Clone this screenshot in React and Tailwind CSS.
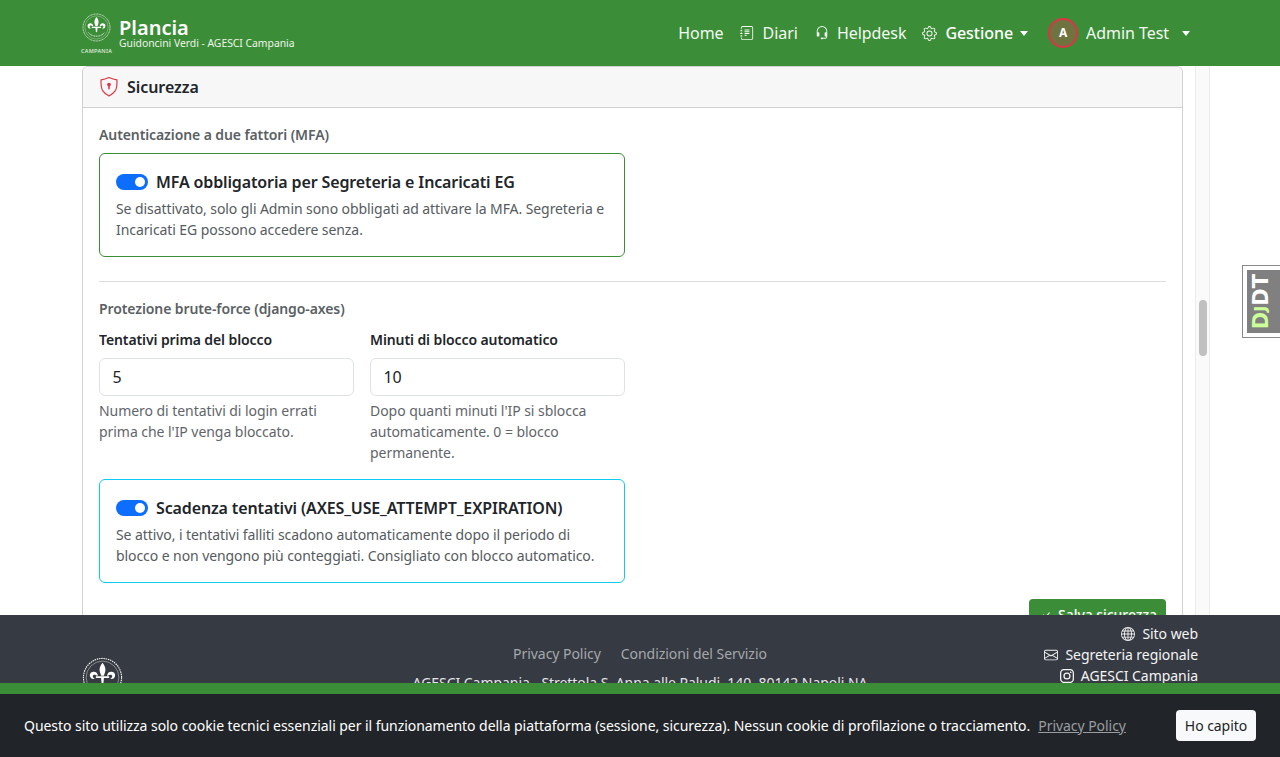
import React from "react";
import { BsJournalText, BsHeadset, BsGear, BsGlobe, BsEnvelope, BsInstagram, BsCheckLg } from "react-icons/bs";

function Logo({ size, label, color = "#ffffff" }) {
  return (
    <div className="flex flex-col items-center shrink-0" style={{ width: size }}>
      <svg viewBox="0 0 40 40" style={{ width: size, height: size }} fill="none">
        <circle cx="20" cy="20" r="18.6" stroke={color} strokeWidth="1.1" strokeDasharray="1.4 0.8" />
        <circle cx="20" cy="20" r="16" stroke={color} strokeWidth="0.4" />
        <path d="M20 5.5c-2.4 3-3.4 5.6-2.6 9 .3 1.4.9 2.5 1.3 3.8h2.6c.4-1.3 1-2.4 1.3-3.8.8-3.4-.2-6-2.6-9z" fill={color} />
        <path d="M15.6 18.3c-.3-2.6-2-4.2-4.6-4-2.600.2-4 2.600-3 5 .8 2 3 2.700 4.500 1.700-1-.3-2-1-2-2.200 0-1.300 1.200-1.900 2.200-1.400.9.400 1.500 1 1.900.900z" fill={color} />
        <path d="M24.400 18.300c.3-2.600 2-4.200 4.600-4 2.600.2 4 2.600 3 5-.8 2-3 2.700-4.500 1.700 1-.3 2-1 2-2.200 0-1.300-1.200-1.900-2.200-1.400-.9.400-1.500 1-1.900.900z" fill={color} />
        <rect x="13.500" y="18.800" width="13" height="1.800" rx=".5" fill={color} />
        <path d="M18.600 20.600h2.800l-.5 5-.9 1.400-.9-1.400z" fill={color} />
        <path d="M9 27c3 3.500 6.500 5 11 5s8-1.500 11-5" stroke={color} strokeWidth="1.200" strokeDasharray="1.500 .8" />
      </svg>
      {label && <span className="text-[5.5px] leading-[7px] font-medium tracking-[0.3px] text-[#e8f2e6] mt-[6px]">CAMPANIA</span>}
    </div>
  );
}

function Caret() {
  return <span className="inline-block w-0 h-0 border-t-[5px] border-x-[4px] border-t-white border-x-transparent" />;
}

function Toggle() {
  return (
    <span className="w-8 h-4 rounded-full bg-[#0d6efd] flex items-center justify-end px-[3px] shrink-0">
      <span className="w-[10px] h-[10px] rounded-full bg-white" />
    </span>
  );
}

function OptionBox({ title, desc, border }) {
  return (
    <div className={`border rounded-md p-4 ${border}`}>
      <div className="flex items-center gap-2 h-6 font-semibold text-base tracking-[-0.13px] text-[#212529]">
        <Toggle />
        <span>{title}</span>
      </div>
      <p className="mt-1 text-sm leading-[21px] tracking-[-0.08px] text-[#555b61]">{desc}</p>
    </div>
  );
}

function Field({ label, value, help }) {
  return (
    <div>
      <div className="text-sm leading-[21px] font-semibold tracking-[-0.1px] text-[#212529] mb-2">{label}</div>
      <div className="h-[38px] rounded-md border border-[#dee2e6] bg-white pl-[12.5px] flex items-center text-base text-[#212529]">{value}</div>
      <p className="mt-1 text-sm leading-[21px] text-[#5f656b]">{help}</p>
    </div>
  );
}

export default function App() {
  return (
    <div className="relative h-[757px] w-full overflow-hidden flex flex-col bg-white font-['Noto_Sans',sans-serif] tracking-[-0.05px] text-[#212529]">
      <header className="h-[66px] shrink-0 bg-[#3c8d37] text-white flex items-center pl-[82px] pr-[90px] justify-between">
        <div className="flex items-center gap-2">
          <div className="mt-px"><Logo size={29} label /></div>
          <div className="flex flex-col -mt-[2px]">
            <span className="text-xl leading-[22px] font-semibold tracking-normal">Plancia</span>
            <span className="text-[10.4px] leading-[8px] tracking-[-0.03px] text-[#eef5ec]">Guidoncini Verdi - AGESCI Campania</span>
          </div>
        </div>
        <nav className="flex items-center text-base text-[#f3f8f2]">
          <span>Home</span>
          <BsJournalText className="ml-[16px] w-[14px] h-[14px]" />
          <span className="ml-[9px]">Diari</span>
          <BsHeadset className="ml-[17px] w-[14px] h-[14px]" />
          <span className="ml-2">Helpdesk</span>
          <BsGear className="ml-[16px] w-[15px] h-[15px]" />
          <span className="ml-2 text-white font-medium">Gestione</span>
          <span className="ml-[7px] flex"><Caret /></span>
          <span className="ml-5 w-[30px] h-[30px] rounded-full border-2 border-[#dc3545] bg-[#6f7340] flex items-center justify-center text-xs font-bold text-white">A</span>
          <span className="ml-2">Admin Test</span>
          <span className="ml-[13px] flex"><Caret /></span>
        </nav>
      </header>

      <main className="h-[549px] shrink-0 overflow-hidden flex items-stretch pl-[82px]">
        <section className="w-[1101px] rounded-t-md border border-[#cfd1d3] shrink-0 h-[640px]">
          <div className="h-[41px] bg-[#f7f7f7] border-b border-[#cfd1d3] rounded-t-md flex items-center gap-2 px-4">
            <svg viewBox="1.5 1 17 18.500" className="w-5 h-5" fill="none">
              <path d="M10 1.500c-2.500 1-4.800 1.700-7.300 2.100-.3 5 .1 8.200 1.800 10.500 1.200 1.800 3.100 3.200 5.500 4.400 2.400-1.200 4.300-2.600 5.500-4.400 1.700-2.300 2.100-5.500 1.800-10.500-2.500-.4-4.800-1.100-7.300-2.100z" stroke="#dc3545" strokeWidth="1.100" />
              <circle cx="10" cy="8" r="1.700" fill="#dc3545" />
              <rect x="9.300" y="8.500" width="1.400" height="4" rx=".6" fill="#dc3545" />
            </svg>
            <span className="text-base font-semibold tracking-[-0.05px] text-[#212529]">Sicurezza</span>
          </div>
          <div className="px-4 pt-4">
            <div className="text-sm leading-[21px] font-semibold tracking-[-0.1px] text-[#5a5f64] mb-2">Autenticazione a due fattori (MFA)</div>
            <div className="w-[526px]">
              <OptionBox
                title="MFA obbligatoria per Segreteria e Incaricati EG"
                desc="Se disattivato, solo gli Admin sono obbligati ad attivare la MFA. Segreteria e Incaricati EG possono accedere senza."
                border="border-[#3c8d37]"
              />
            </div>
            <hr className="mt-6 mb-4 border-[#dcdddf]" />
            <div className="text-sm leading-[21px] font-semibold tracking-[-0.1px] text-[#5a5f64] mb-[10px]">Protezione brute-force (django-axes)</div>
            <div className="w-[526px]">
              <div className="grid grid-cols-2 gap-4">
                <Field label="Tentativi prima del blocco" value="5" help="Numero di tentativi di login errati prima che l'IP venga bloccato." />
                <Field label="Minuti di blocco automatico" value="10" help="Dopo quanti minuti l'IP si sblocca automaticamente. 0 = blocco permanente." />
              </div>
              <div className="mt-4">
                <OptionBox
                  title="Scadenza tentativi (AXES_USE_ATTEMPT_EXPIRATION)"
                  desc="Se attivo, i tentativi falliti scadono automaticamente dopo il periodo di blocco e non vengono più conteggiati. Consigliato con blocco automatico."
                  border="border-[#0dcaf0]"
                />
              </div>
            </div>
            <div className="flex justify-end mt-4">
              <span className="h-[31px] w-[137px] rounded bg-[#3c8d37] text-white text-sm font-medium flex items-center justify-end gap-[7px] pr-[9px]">
                <BsCheckLg className="w-[10px] h-[10px]" />
                Salva sicurezza
              </span>
            </div>
          </div>
        </section>
        <div className="ml-3 w-[15px] h-full shrink-0 border-x border-[#ececec] bg-[#fafafa] pt-[234px] flex justify-center">
          <div className="w-2 h-14 rounded-full bg-[#c1c1c1]" />
        </div>
      </main>

      <footer className="flex-1 min-h-0 overflow-hidden bg-[#363a42] text-white pl-[82px] pr-[82px] grid grid-cols-[1fr_auto_1fr]">
        <div className="pt-[42px]"><Logo size={41} /></div>
        <div className="pt-[28px] text-center text-sm leading-[21px]">
          <div className="flex justify-center gap-5 text-[#a5a8ac]">
            <span>Privacy Policy</span>
            <span>Condizioni del Servizio</span>
          </div>
          <div className="mt-[8px] text-[#e4e5e7]">AGESCI Campania - Strettola S. Anna alle Paludi, 140, 80142 Napoli NA</div>
        </div>
        <div className="pt-2 flex flex-col items-end text-sm leading-[21px] text-[#f4f4f5]">
          <div className="flex items-center gap-[7px]"><BsGlobe className="w-[14px] h-[14px]" />Sito web</div>
          <div className="flex items-center gap-[7px]"><BsEnvelope className="w-[14px] h-[14px]" />Segreteria regionale</div>
          <div className="flex items-center gap-[7px]"><BsInstagram className="w-[14px] h-[14px]" />AGESCI Campania</div>
        </div>
      </footer>

      <div className="absolute bottom-0 inset-x-0 h-[74px] border-t-[11px] border-[#3c8d37] bg-[#212529] text-white text-sm flex items-center justify-between pl-6 pr-6">
        <div className="flex items-center gap-2">
          <span>Questo sito utilizza solo cookie tecnici essenziali per il funzionamento della piattaforma (sessione, sicurezza). Nessun cookie di profilazione o tracciamento.</span>
          <span className="underline text-[#9a9da0]">Privacy Policy</span>
        </div>
        <span className="h-[31px] w-20 rounded bg-[#f8f9fa] text-[#212529] flex items-center justify-center">Ho capito</span>
      </div>

      <div className="absolute right-0 top-[265px] w-[38px] h-[73px] bg-white border border-r-0 border-[#8a8a8a] p-1 pr-0">
        <div className="w-full h-full bg-[#808080] flex items-center justify-center overflow-hidden pr-[5px]">
          <span className="[writing-mode:vertical-rl] rotate-180 font-['DejaVu_Sans',sans-serif] font-bold text-[21px] leading-none tracking-normal text-white">
            <span className="text-[#ccff99]">D</span><span className="text-[#ccff99] text-base">J</span>DT
          </span>
        </div>
      </div>
    </div>
  );
}
